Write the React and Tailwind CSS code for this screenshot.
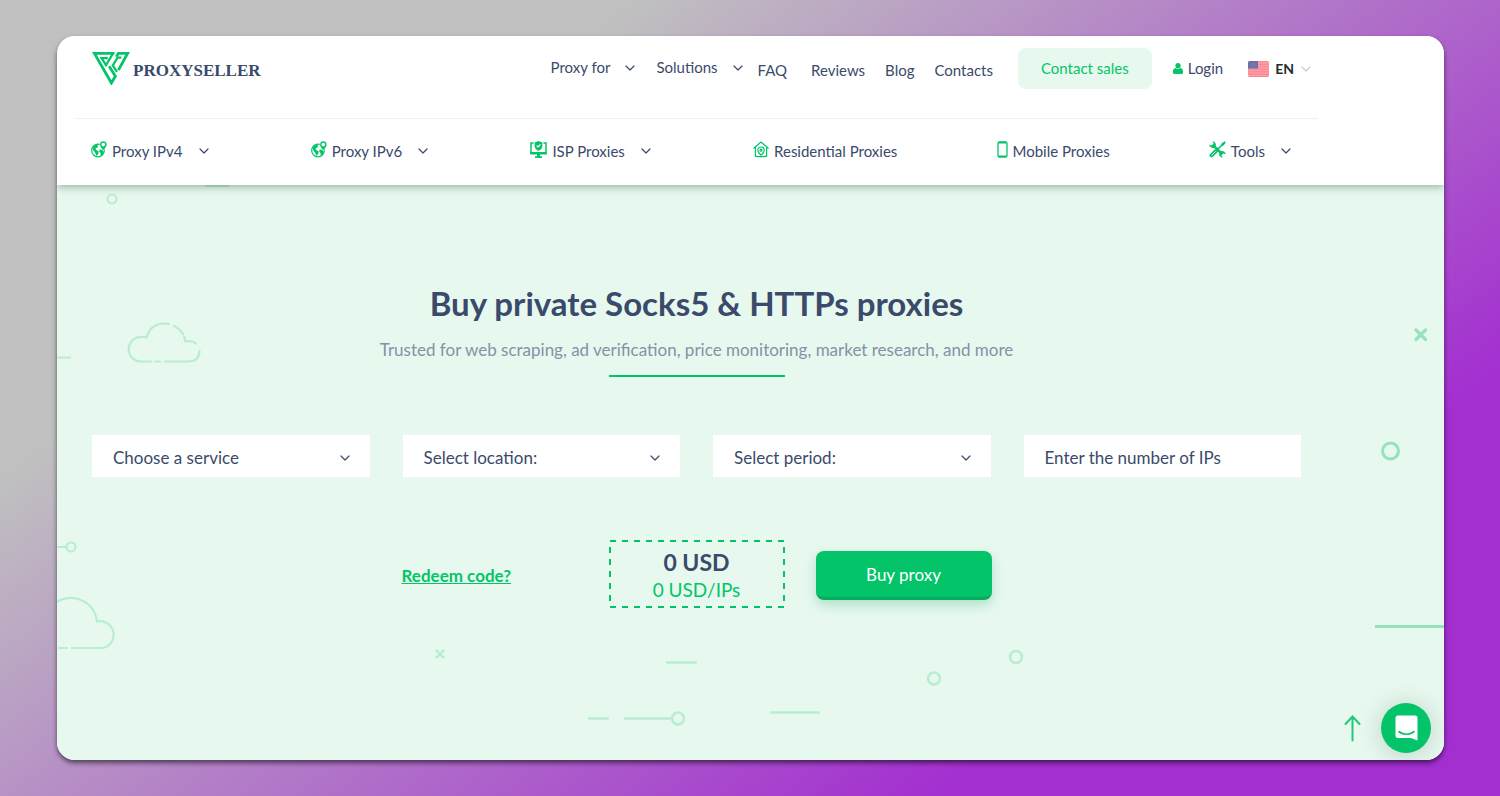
import React from "react";
import { ChevronDown } from "lucide-react";

const topLinks = ["Reviews", "Blog", "Contacts"];

function Chevron({ className = "text-[#3a4a6b]" }) {
  return <ChevronDown aria-hidden="true" className={`size-4 shrink-0 ${className}`} strokeWidth={1.8} />;
}

function Logo() {
  return (
    <svg width="38" height="33" viewBox="0 0 38 33" fill="none" stroke="#04c46a" strokeWidth="2.8" aria-hidden="true">
      <path d="M22.500 1.400H2.400L19.400 31L23.400 24.200L17.200 14.200" />
      <path d="M21 1.400L14 13L9.600 6.200h6.200" strokeWidth="2.300" />
      <path d="M24.400 4.800L26.400 1.400H35.600L26.400 18.200" />
      <path d="M29.400 5.600L25.600 5.600L20.800 13.400L25 20" strokeWidth="2.300" />
    </svg>
  );
}

function GlobePin() {
  return (
    <svg width="16" height="17" viewBox="0 0 16 17" fill="none" aria-hidden="true">
      <circle cx="7" cy="9.500" r="6.300" stroke="#04c46a" strokeWidth="1.200" />
      <path d="M2 6l3-2.200 2.200.8-.8 2-2.200 1.200 1.800 1.600 1.800 1.200-.6 2.400-1.600 2L4 11.400 2 9z" fill="#04c46a" />
      <path d="M8.600 8.400l2.600.4 1.600 2.200-1.200 2.600-1.800 1-.4-2.600-1.200-1.400z" fill="#04c46a" />
      <path d="M12.300 0a3.600 3.600 0 0 1 3.600 3.600c0 2.200-3.600 6-3.600 6S8.700 5.800 8.700 3.600A3.600 3.600 0 0 1 12.300 0z" fill="#04c46a" stroke="#fff" strokeWidth=".5" />
      <circle cx="12.300" cy="3.600" r="1.800" fill="#fff" />
    </svg>
  );
}

function ShieldMonitor() {
  return (
    <svg width="17" height="17" viewBox="0 0 17 17" fill="none" aria-hidden="true">
      <path d="M3.600 2H1v10.300h15V2h-2.600" stroke="#04c46a" strokeWidth="1.500" />
      <path d="M.3 11h16.400v2.600H.3zM7 13h3v2.200h2V17H5v-1.800h2z" fill="#04c46a" />
      <path d="M8.500 0l3.900 1.400v3.400c0 2.400-1.800 4.200-3.900 5.200-2.100-1-3.900-2.800-3.900-5.200V1.400z" fill="#04c46a" />
      <path d="M6.600 4.600L8 6l2.500-2.600" stroke="#fff" strokeWidth="1.200" />
    </svg>
  );
}

function HousePin() {
  return (
    <svg width="16" height="17" viewBox="0 0 16 17" fill="none" stroke="#04c46a" strokeWidth="1.200" strokeLinecap="round" strokeLinejoin="round" aria-hidden="true">
      <path d="M.8 7.200L8 1l7.200 6.200M2.400 6.600v8.800h2M13.600 6.600v8.800h-2" />
      <path d="M8 6a3.200 3.200 0 0 1 3.200 3.200c0 2.400-3.200 5-3.200 5S4.800 11.600 4.800 9.200A3.200 3.200 0 0 1 8 6z" />
      <circle cx="8" cy="9.200" r="1" />
      <path d="M4.600 15.600h6.800" />
    </svg>
  );
}

function Phone() {
  return (
    <svg width="11" height="17" viewBox="0 0 11 17" fill="none" stroke="#04c46a" aria-hidden="true">
      <rect x="1" y=".8" width="9" height="15.400" rx="1.600" strokeWidth="1.300" />
      <path d="M1.600 1.600h7.800M1.600 15.200h7.800" strokeWidth="1.600" />
    </svg>
  );
}

function ToolsIcon() {
  return (
    <svg width="17" height="17" viewBox="0 0 17 17" fill="none" aria-hidden="true">
      <path d="M3.600 3.600l9.800 9.800" stroke="#04c46a" strokeWidth="2.600" />
      <path d="M.3 3.400a3.500 3.500 0 0 0 4.800 3.300l1.600-1.600A3.500 3.500 0 0 0 3.200.4l1.500 2-.4 1.600-1.700.4zM16.700 13.600a3.500 3.500 0 0 0-4.800-3.300l-1.600 1.600a3.500 3.500 0 0 0 3.500 4.700l-1.500-2 .4-1.600 1.700-.4z" fill="#04c46a" />
      <path d="M9 8l5-5" stroke="#04c46a" strokeWidth="1.600" />
      <path d="M12.600 2.400L15.600.2l1.200 1.200-2.200 3-1.400.4-1-1z" fill="#04c46a" />
      <path d="M2.600 14.400l4-4" stroke="#04c46a" strokeWidth="4" strokeLinecap="round" />
      <path d="M2.800 14.200l3.400-3.400" stroke="#fff" strokeWidth="1" strokeLinecap="round" />
    </svg>
  );
}

function Flag() {
  return (
    <svg width="21" height="16" viewBox="0 0 21 16" aria-hidden="true">
      <clipPath id="flag-shape"><rect width="21" height="16" rx="2" /></clipPath>
      <g clipPath="url(#flag-shape)">
        <rect width="21" height="16" fill="#ff9fa6" />
        <path d="M0 .8h21M0 3.300h21M0 5.800h21M0 8.300h21M0 10.800h21M0 13.200h21M0 15.500h21" stroke="#f58590" strokeWidth="1" />
        <rect width="10" height="7.500" fill="#6a6da6" />
        <path d="M1.500 2h7M1.500 4h7M1.500 6h7" stroke="#9295c4" strokeWidth=".8" strokeDasharray="1 1" />
      </g>
    </svg>
  );
}

const categories = [
  { label: "Proxy IPv4", Icon: GlobePin, menu: true },
  { label: "Proxy IPv6", Icon: GlobePin, menu: true },
  { label: "ISP Proxies", Icon: ShieldMonitor, menu: true },
  { label: "Residential Proxies", Icon: HousePin },
  { label: "Mobile Proxies", Icon: Phone },
  { label: "Tools", Icon: ToolsIcon, menu: true },
];

function Category({ label, Icon, menu }) {
  const body = (
    <>
      <span className="pb-1"><Icon /></span>
      <span>{label}</span>
    </>
  );
  return menu ? (
    <button type="button" className="flex items-center gap-[5px]">
      {body}
      <span className="pl-2"><Chevron /></span>
    </button>
  ) : (
    <a href="#" className="flex items-center gap-[5px]">{body}</a>
  );
}

function Header() {
  return (
    <header className="relative z-10 bg-white pl-[18px] shadow-[0_2px_8px_rgba(30,70,50,0.4)]">
      <div className="max-w-[1243px]">
        <div className="flex items-center justify-between border-b border-[#edf0ef] pt-3 pr-1 pb-[29px] pl-[17px]">
          <a href="#" className="flex items-center gap-[3px]">
            <Logo />
            <span className="pt-1 font-['Liberation_Serif',serif] text-[17px] font-bold text-[#3a4a6b]">PROXYSELLER</span>
          </a>
          <div className="flex items-center">
            <nav aria-label="Main" className="flex items-center">
              <div className="flex gap-[18px] pb-0.5">
                <button type="button" className="flex items-center gap-3">Proxy for <Chevron /></button>
                <button type="button" className="flex items-center gap-3">Solutions <Chevron /></button>
              </div>
              <div className="flex pt-1 pl-3">
                <a href="#" className="pr-6">FAQ</a>
                <div className="flex gap-5">
                  {topLinks.map((t) => <a href="#" key={t}>{t}</a>)}
                </div>
              </div>
            </nav>
            <button type="button" className="ml-[25px] h-[41px] rounded-lg bg-[#e7f9ef] px-[23px] text-[#04c46a]">Contact sales</button>
            <a href="#" className="ml-[21px] flex items-center gap-[5px]">
              <svg width="10" height="11" viewBox="0 0 10 11" fill="#04c46a" aria-hidden="true">
                <ellipse cx="5" cy="2.800" rx="2.600" ry="2.800" />
                <path d="M2.500 5C1 5.300 0 6.500 0 8.300v1.500C0 10.500.5 11 1.200 11h7.600c.7 0 1.200-.5 1.200-1.200V8.300C10 6.500 9 5.300 7.500 5 6.200 6.500 3.800 6.500 2.500 5z" />
              </svg>
              Login
            </a>
            <button type="button" className="ml-[25px] flex items-center gap-1 text-sm font-bold text-[#1f2d2c]">
              <span className="pr-0.5"><Flag /></span> EN <Chevron className="text-[#c9cdcc]" />
            </button>
          </div>
        </div>
        <nav aria-label="Products" className="flex h-[66px] items-center justify-between pr-6 pb-0.5 pl-4">
          {categories.map((c) => <Category key={c.label} {...c} />)}
        </nav>
      </div>
    </header>
  );
}

function Backdrop() {
  return (
    <svg className="absolute inset-0 size-full" viewBox="0 0 1387 575" preserveAspectRatio="xMidYMid slice" fill="none" stroke="#b8edd1" strokeWidth="2.500" strokeLinecap="round" aria-hidden="true">
      <circle cx="55" cy="14" r="4.500" strokeWidth="2.200" />
      <path d="M149 1h22M-4 172.500H13" strokeWidth="2.200" />
      <path d="M94 176.500H84A12.200 12.200 0 0 1 84 151.800Q87 151.500 89.500 152.500Q93 139 107 138.300L112 139M117 141Q123 144 126 149M127 151.500L128.500 156.500Q135 155 139 158.500M142.500 166Q142 176.500 132 176.500H108M98 176.500h5" strokeWidth="2.200" />
      <circle cx="14" cy="362" r="4.500" strokeWidth="2.200" />
      <path d="M-2 362h11M-2 418Q6 412.500 16 413Q37 416 40 436.500A13.500 13.500 0 1 1 46 463H15M2 463h8" strokeWidth="2.200" />
      <path d="M379.500 465.500l7 7m0-7l-7 7" />
      <path d="M610 477.500h29M532 533.500h19M568 533.500h47M714 527.500h48" strokeWidth="2.400" />
      <circle cx="621" cy="533.500" r="6" />
      <circle cx="877" cy="493.500" r="6" />
      <circle cx="959" cy="472" r="6" />
      <g stroke="#95e3ba" strokeWidth="3">
        <path d="M1359 145l9.500 9.500m0-9.500l-9.500 9.500" strokeWidth="3.200" />
        <circle cx="1333.500" cy="266" r="8" />
        <path d="M1318 441.500h80" strokeLinecap="butt" />
      </g>
    </svg>
  );
}

function SelectField({ label }) {
  return (
    <div className="relative">
      <select aria-label={label} className="h-[42px] w-full appearance-none bg-white px-[21px] pt-1 text-[17px]">
        <option>{label}</option>
      </select>
      <ChevronDown aria-hidden="true" strokeWidth={1.8} className="pointer-events-none absolute top-[15px] right-[17px] size-4" />
    </div>
  );
}

function Hero() {
  return (
    <main className="relative grow overflow-hidden bg-[#e7f9ef] pl-[18px]">
      <Backdrop />
      <div className="relative max-w-[1243px] px-[17px] pt-24">
        <h1 className="text-center text-[33px] leading-[44px] font-bold">Buy private Socks5 &amp; HTTPs proxies</h1>
        <p className="mt-[13px] text-center text-[17px] leading-6 text-[#8492a6]">
          Trusted for web scraping, ad verification, price monitoring, market research, and more
        </p>
        <div className="mx-auto mt-[13px] h-0.5 w-44 bg-[#04c46a]" />
        <form onSubmit={(e) => e.preventDefault()} className="mt-[58px]">
          <div className="grid grid-cols-4 gap-[33px]">
            <SelectField label="Choose a service" />
            <SelectField label="Select location:" />
            <SelectField label="Select period:" />
            <input type="text" aria-label="Enter the number of IPs" placeholder="Enter the number of IPs" className="h-[42px] w-full bg-white px-[21px] pt-0.5 text-[17px] placeholder:text-[#3a4a6b] placeholder:opacity-100" />
          </div>
          <div className="mx-auto mt-[63px] grid max-w-[590px] grid-cols-[1fr_176px_1fr] items-center">
            <a href="#" className="pt-0.5 text-[17px] font-bold text-[#04c46a] underline">Redeem code?</a>
            <div className="relative py-2 text-center">
              <svg className="absolute inset-0 size-full" aria-hidden="true">
                <rect x="1" y="1" width="174" height="66" fill="none" stroke="#04c46a" strokeWidth="2" strokeDasharray="6 6" />
              </svg>
              <p className="text-[23px] leading-7 font-bold">0 USD</p>
              <p className="pt-0.5 text-[19px] leading-6 text-[#04c46a]">0 USD/IPs</p>
            </div>
            <button type="submit" className="h-[49px] w-44 justify-self-end rounded-lg border-b-[3px] border-[#05ad5f] bg-[#04c46a] pt-0.5 text-[17px] text-white shadow-[0_5px_12px_rgba(4,150,90,0.25)]">
              Buy proxy
            </button>
          </div>
        </form>
      </div>
      <div className="absolute right-[13px] bottom-[7px] flex items-center gap-[18px]">
        <button type="button" aria-label="Back to top">
          <svg width="20" height="28" viewBox="0 0 20 28" fill="none" stroke="#1fc97a" strokeWidth="2" strokeLinecap="round" aria-hidden="true">
            <path d="M9.500 2.500v24M2.500 10L9.500 2.500l7 7.500" />
          </svg>
        </button>
        <button type="button" aria-label="Open chat" className="flex size-[50px] items-center justify-center rounded-full bg-[#04c46a] shadow-[0_2px_24px_rgba(0,0,0,0.18)]">
          <svg width="23" height="26" viewBox="0 0 23 26" aria-hidden="true">
            <path d="M3 .5h17a2.500 2.500 0 0 1 2.500 2.500v22.500L16 23H3A2.500 2.500 0 0 1 .5 20.500V3A2.500 2.500 0 0 1 3 .5z" fill="#fff" />
            <path d="M4 16.800c4.500 3.200 10.500 3.200 15 0" fill="none" stroke="#04c46a" strokeWidth="1.800" strokeLinecap="round" />
          </svg>
        </button>
      </div>
    </main>
  );
}

export default function App() {
  return (
    <div className="flex min-h-screen bg-[linear-gradient(143deg,#c0c0c0_25%,#a32fd0_78%)] pt-9 pr-14 pb-9 pl-[57px] font-['Lato',sans-serif] text-[15px] text-[#3a4a6b]">
      <div className="flex grow flex-col overflow-hidden rounded-[18px] bg-white shadow-[0_3px_5px_rgba(0,0,0,0.55)]">
        <Header />
        <Hero />
      </div>
    </div>
  );
}
